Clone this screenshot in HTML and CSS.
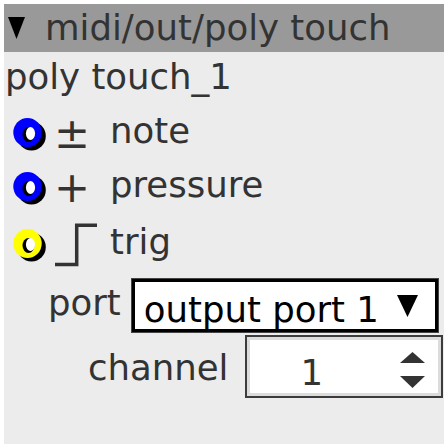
FILE: index.html
```html
<!DOCTYPE html>
<html lang="en">

<head>
    <meta charset="UTF-8">
    <meta name="viewport" content="width=device-width, initial-scale=1.0">
    <title>midi/out/poly touch</title>

    <link rel="stylesheet" href="styles.css">
</head>

<body>
    <div class="panel">
        <div class="header">
            <svg class="caret" width="17" height="22" viewBox="0 0 17 22">
                <polygon points="0,0 17,0 8.5,22" />
            </svg>
            <span class="header-title">midi/out/poly touch</span>
        </div>

        <div class="content">
            <div class="title">poly touch_1</div>

            <div class="row">
                <svg class="inlet" width="40" height="40" viewBox="0 0 40 40">
                    <ellipse cx="21.5" cy="25" rx="14.3" ry="14.5" fill="#000" />
                    <ellipse cx="17.5" cy="21.5" rx="14.2" ry="14.6" fill="#0000ff" />
                    <ellipse cx="18.5" cy="23.5" rx="6" ry="7.5" fill="#000" />
                    <ellipse cx="20.5" cy="22.5" rx="4.6" ry="6.5" fill="#fff" />
                </svg>
                <span class="sign">±</span>
                <span class="label">note</span>
            </div>

            <div class="row">
                <svg class="inlet" width="40" height="40" viewBox="0 0 40 40">
                    <ellipse cx="21.5" cy="25" rx="14.3" ry="14.5" fill="#000" />
                    <ellipse cx="17.5" cy="21.5" rx="14.2" ry="14.6" fill="#0000ff" />
                    <ellipse cx="18.5" cy="23.5" rx="6" ry="7.5" fill="#000" />
                    <ellipse cx="20.5" cy="22.5" rx="4.6" ry="6.5" fill="#fff" />
                </svg>
                <span class="sign">+</span>
                <span class="label">pressure</span>
            </div>

            <div class="row row-trig">
                <svg class="inlet" width="40" height="40" viewBox="0 0 40 40">
                    <ellipse cx="21.5" cy="25" rx="14.3" ry="14.5" fill="#000" />
                    <ellipse cx="17.5" cy="21.5" rx="14.2" ry="14.6" fill="#ffff00" />
                    <ellipse cx="18.5" cy="23.5" rx="6" ry="7.5" fill="#000" />
                    <ellipse cx="20.5" cy="22.5" rx="4.6" ry="6.5" fill="#fff" />
                </svg>
                <span class="sign">
                    <svg class="step" width="42" height="48" viewBox="0 0 42 48">
                        <polyline points="0,46.5 21.7,46.5 21.7,7.2 42,7.2" />
                    </svg>
                </span>
                <span class="label">trig</span>
            </div>

            <div class="controls">
                <div class="field field-port">
                    <span class="field-label">port</span>
                    <div class="select">
                        <span class="select-text">output port 1</span>
                        <svg class="select-arrow" width="21" height="22" viewBox="0 0 21 22">
                            <polygon points="0,0 21,0 10.5,22" />
                        </svg>
                    </div>
                </div>

                <div class="field field-channel">
                    <span class="field-label">channel</span>
                    <div class="spinbox">
                        <span class="spin-value">1</span>
                        <svg class="spin-arrows" width="25" height="36" viewBox="0 0 25 36">
                            <polygon points="0,11 12.5,0 25,11" />
                            <polygon points="0,24 25,24 12.5,36" />
                        </svg>
                    </div>
                </div>
            </div>
        </div>
    </div>
</body>

</html>
```

FILE: styles.css
```css
body {
    margin: 0;
    background-color: #fff;
    font-family: 'DejaVu Sans', 'Liberation Sans', sans-serif;
    font-size: 35.5px;
    line-height: 42px;
    color: #333;
}

.panel {
    margin: 4px;
    width: 440px;
    height: 440px;
    background-color: #ececec;
    overflow: hidden;
}

.header {
    height: 48px;
    background-color: #999;
    display: flex;
    align-items: center;
    gap: 20px;
    white-space: nowrap;
}

.caret {
    margin-left: 4px;
    fill: #000;
}

.content {
    display: flex;
    flex-direction: column;
    gap: 12px;
    padding-top: 4px;
}

.title {
    padding-left: 1px;
    white-space: nowrap;
}

.row {
    height: 42px;
    display: flex;
    align-items: center;
    padding-left: 6px;
    white-space: nowrap;
}

.row-trig {
    height: 48px;
}

.inlet {
    flex: none;
}

.sign {
    width: 56px;
    margin-left: 4px;
    font-size: 43px;
    line-height: 42px;
    padding-top: 4px;
    flex: none;
}

.row-trig .sign {
    padding-top: 0;
    display: flex;
}

.step {
    margin-left: 1px;
    overflow: visible;
}

.step polyline {
    fill: none;
    stroke: #333;
    stroke-width: 3.5;
}

.controls {
    display: flex;
    flex-direction: column;
    gap: 2px;
}

.field {
    display: flex;
    align-items: flex-start;
    white-space: nowrap;
}

.field-port {
    height: 55px;
    padding-left: 44px;
    gap: 11px;
}

.field-port .field-label {
    margin-top: 4px;
}

.select {
    margin-top: 1px;
    box-sizing: border-box;
    width: 306px;
    height: 53px;
    border: 3px solid #000;
    outline: 1px solid #444;
    background-color: #fff;
    color: #000;
    display: flex;
    justify-content: space-between;
    align-items: flex-start;
    padding: 0 17px 0 9px;
    overflow: hidden;
}

.select-text {
    margin-top: 7px;
}

.select-arrow {
    margin-top: 13px;
    fill: #000;
}

.field-channel {
    height: 63px;
    padding-left: 84px;
    gap: 17px;
}

.field-channel .field-label {
    margin-top: 12px;
}

.spinbox {
    box-sizing: border-box;
    width: 198px;
    height: 63px;
    border: 2px solid #3c3c3c;
    box-shadow: inset 0 0 0 3px #dcdcdc;
    background-color: #fff;
    display: flex;
    align-items: flex-start;
    padding-left: 53px;
}

.spin-value {
    margin-top: 15px;
}

.spin-arrows {
    margin: 15px 16px 0 auto;
    fill: #333;
}
```
